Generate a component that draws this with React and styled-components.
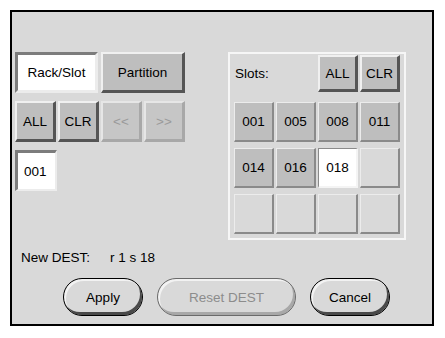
import styled, { createGlobalStyle } from 'styled-components';

const GlobalStyle = createGlobalStyle`
  body {
    margin: 0;
    background: #ffffff;
    font-family: "Liberation Sans", Arial, sans-serif;
  }
`;

const slots = ['001', '005', '008', '011', '014', '016', '018', '', '', '', '', ''];
const selectedSlot = '018';

const App = () => {
  return (
    <>
      <GlobalStyle />
      <Frame>
        <TopArea>
          <LeftColumn>
            <ButtonRow>
              <BevelButton $w={83} $h={41} $state="pressed">Rack/Slot</BevelButton>
              <BevelButton $w={84} $h={41}>Partition</BevelButton>
            </ButtonRow>
            <ButtonRow $gap={2}>
              <BevelButton $w={41} $h={41}>ALL</BevelButton>
              <BevelButton $w={41} $h={41}>CLR</BevelButton>
              <BevelButton $w={41} $h={41} $state="disabled">&lt;&lt;</BevelButton>
              <BevelButton $w={41} $h={41} $state="disabled">&gt;&gt;</BevelButton>
            </ButtonRow>
            <ValueBox>001</ValueBox>
          </LeftColumn>
          <SlotPanel>
            <SlotHeader>
              <SlotLabel>Slots:</SlotLabel>
              <BevelButton $w={40} $h={37}>ALL</BevelButton>
              <BevelButton $w={40} $h={37}>CLR</BevelButton>
            </SlotHeader>
            <SlotGrid>
              {slots.map((s, i) => (
                <SlotCell key={i} $filled={s !== ''} $selected={s === selectedSlot}>
                  {s}
                </SlotCell>
              ))}
            </SlotGrid>
          </SlotPanel>
        </TopArea>
        <DestRow>
          <DestLabel>New DEST:</DestLabel>
          <span>r 1 s 18</span>
        </DestRow>
        <ActionRow>
          <PillButton $w={80}>Apply</PillButton>
          <PillButton $w={139} $disabled>Reset DEST</PillButton>
          <PillButton $w={80}>Cancel</PillButton>
        </ActionRow>
      </Frame>
    </>
  );
};

export default App;

const Frame = styled.div`
  box-sizing: border-box;
  width: 424px;
  height: 316px;
  margin: 10px 0 0 10px;
  border: 2px solid #000;
  background: #d9d9d9;
  padding: 40px 0 0 3px;
  display: flex;
  flex-direction: column;
  font-size: 13.5px;
  color: #000;
`;

const TopArea = styled.div`
  display: flex;
  gap: 43px;
  align-items: flex-start;
`;

const LeftColumn = styled.div`
  width: 170px;
  display: flex;
  flex-direction: column;
  gap: 8px;
`;

const ButtonRow = styled.div`
  display: flex;
  gap: ${(p) => p.$gap ?? 3}px;
`;

const BevelButton = styled.div`
  box-sizing: border-box;
  width: ${(p) => p.$w}px;
  height: ${(p) => p.$h}px;
  display: flex;
  align-items: center;
  justify-content: center;
  border-style: solid;
  border-width: ${(p) => (p.$state === 'pressed' ? '3px' : '2px 3px 3px 2px')};
  border-color: ${(p) =>
    p.$state === 'pressed'
      ? '#7c7c7c #ececec #ececec #7c7c7c'
      : p.$state === 'disabled'
      ? '#e6e6e6 #a8a8a8 #a8a8a8 #e6e6e6'
      : '#f0f0f0 #555 #555 #f0f0f0'};
  background: ${(p) => (p.$state === 'pressed' ? '#ffffff' : p.$state === 'disabled' ? '#c6c6c6' : '#bebebe')};
  color: ${(p) => (p.$state === 'disabled' ? '#9a9a9a' : '#000')};
`;

const ValueBox = styled.div`
  box-sizing: border-box;
  width: 42px;
  height: 41px;
  display: flex;
  align-items: center;
  padding-left: 6px;
  background: #ffffff;
  border-style: solid;
  border-width: 3px 2px 2px 3px;
  border-color: #7c7c7c #ececec #ececec #7c7c7c;
`;

const SlotPanel = styled.div`
  box-sizing: border-box;
  width: 178px;
  border: 2px solid #f6f6f6;
  padding: 1px 4px 4px 4px;
`;

const SlotHeader = styled.div`
  display: flex;
  align-items: center;
  gap: 2px;
  height: 37px;
`;

const SlotLabel = styled.span`
  flex: 1;
  padding-left: 1px;
`;

const SlotGrid = styled.div`
  display: grid;
  grid-template-columns: repeat(4, 40px);
  grid-auto-rows: 40px;
  column-gap: 2px;
  row-gap: 6px;
  margin-top: 10px;
`;

const SlotCell = styled.div`
  box-sizing: border-box;
  display: flex;
  align-items: center;
  justify-content: center;
  border-style: solid;
  border-width: 1px 2px 2px 1px;
  border-color: ${(p) => (p.$selected ? '#8a8a8a #f4f4f4 #f4f4f4 #8a8a8a' : '#ececec #8a8a8a #8a8a8a #ececec')};
  background: ${(p) => (p.$selected ? '#ffffff' : p.$filled ? '#bebebe' : '#d9d9d9')};
`;

const DestRow = styled.div`
  display: flex;
  margin-top: 10px;
  padding-left: 6px;
  line-height: 16px;
`;

const DestLabel = styled.span`
  width: 89px;
`;

const ActionRow = styled.div`
  display: flex;
  gap: 14px;
  margin-top: 12px;
  padding-left: 48px;
`;

const PillButton = styled.div`
  box-sizing: border-box;
  width: ${(p) => p.$w}px;
  height: 38px;
  display: flex;
  align-items: center;
  justify-content: center;
  border-radius: 19px;
  border: 1px solid ${(p) => (p.$disabled ? '#6a6a6a' : '#000')};
  background: #d9d9d9;
  box-shadow: ${(p) =>
    p.$disabled
      ? 'inset -2px -3px 0 #a8a8a8, inset 2px 2px 0 #f2f2f2'
      : 'inset -2px -3px 0 #4a4a4a, inset 2px 2px 0 #f2f2f2'};
  color: ${(p) => (p.$disabled ? '#8c8c8c' : '#000')};
`;
